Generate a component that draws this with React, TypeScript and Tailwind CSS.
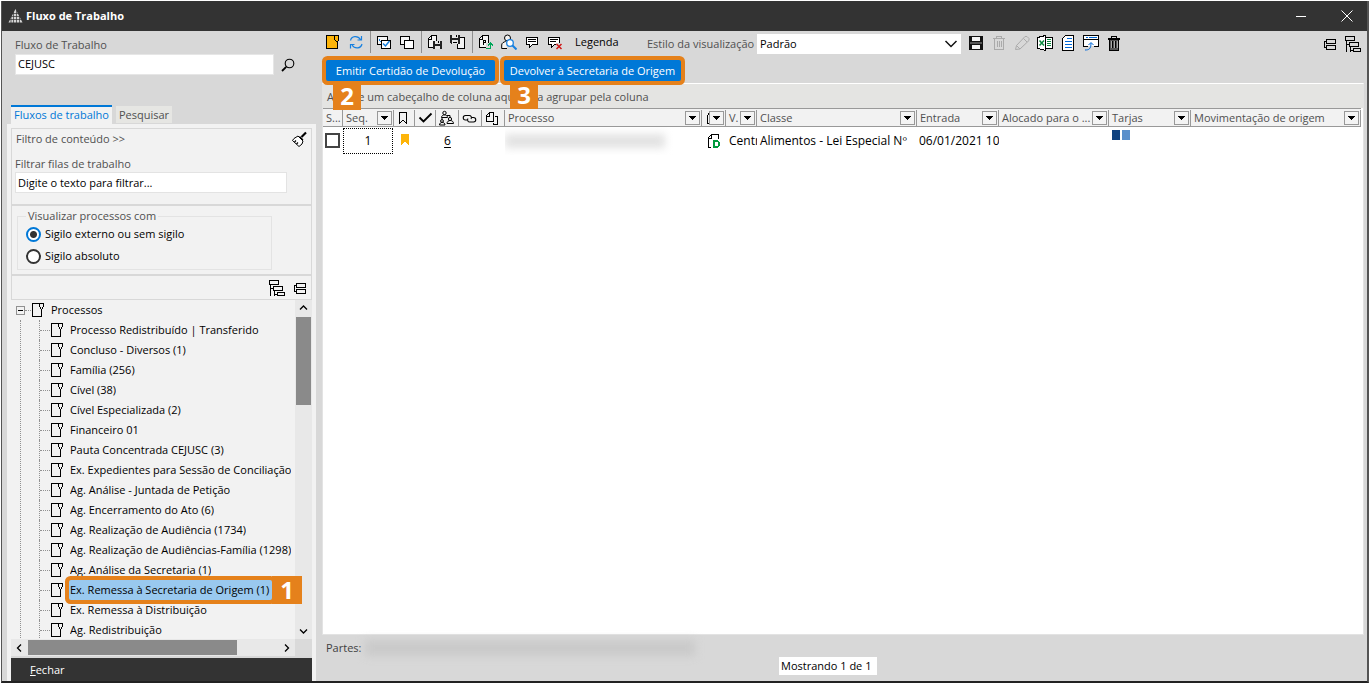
import { useState, type ReactNode } from "react";

type IconProps = { children: ReactNode; className?: string };

function Icon({ children, className = "h-4 w-4" }: IconProps) {
  return (
    <svg
      viewBox="0 0 16 16"
      className={`${className} shrink-0`}
      fill="none"
      stroke="#000"
      strokeWidth="1"
      shapeRendering="crispEdges"
      aria-hidden="true"
    >
      {children}
    </svg>
  );
}

const QueueIcon = () => (
  <Icon>
    <path d="M11.500 1.500h-10v13h9v-6M8.500 2v3M9.500 5v2M10.500 7v2M11.500 5v2M12.500 2v3M8 1.500h5" />
  </Icon>
);

const TreeExpandIcon = () => (
  <Icon>
    <path d="M.5.5h9v4h-9zM4.500 6.500h9v4h-9zM8.500 12.500h7v3h-7zM1.500 5v10.500M1.500 8.500h3M5.500 11v4.500M5.500 14.500h3" />
  </Icon>
);

const TreeCollapseIcon = () => (
  <Icon>
    <path d="M4.500 3.500h9v4h-9zM4.500 9.500h9v4h-9zM4 5.500H2.500v6H4" />
  </Icon>
);

const TrashIcon = ({ muted = false }: { muted?: boolean }) => (
  <Icon>
    {muted ? (
      <path d="M2 3.500h12M5.500 3V1.500h5V3M3.500 4v10.500h9V4M6.500 6v6M8.500 6v6M10.500 6v6" stroke="#aaa" />
    ) : (
      <g>
        <rect x="3" y="4" width="10" height="11" fill="#555" stroke="none" />
        <path d="M2 3.500h12M2 4.500h12M5.500 3V1.500h5V3M3.500 5v10h9V5" />
        <path d="M6.500 6v7M9.500 6v7" />
        <path d="M5.500 6v7M8.500 6v7M11.500 6v7" stroke="#aaa" />
      </g>
    )}
  </Icon>
);

function ToolButton({ label, children }: { label: string; children: ReactNode }) {
  return (
    <button type="button" aria-label={label} className="flex h-4 w-4 shrink-0 items-center justify-center">
      {children}
    </button>
  );
}

const Divider = () => <span className="mr-[5px] ml-1.5 h-[22px] w-px shrink-0 bg-[#8f8f8f]" />;

function Badge({ children, className }: { children: ReactNode; className: string }) {
  return (
    <span
      className={`absolute z-20 flex items-center justify-center bg-[#e5811b] font-['Open_Sans',sans-serif] text-2xl leading-6 font-bold text-white ${className}`}
    >
      {children}
    </span>
  );
}

const queues = [
  "Processo Redistribuído | Transferido",
  "Concluso - Diversos (1)",
  "Família (256)",
  "Cível (38)",
  "Cível Especializada (2)",
  "Financeiro 01",
  "Pauta Concentrada CEJUSC (3)",
  "Ex. Expedientes para Sessão de Conciliação",
  "Ag. Análise - Juntada de Petição",
  "Ag. Encerramento do Ato (6)",
  "Ag. Realização de Audiência (1734)",
  "Ag. Realização de Audiências-Família (1298)",
  "Ag. Análise da Secretaria (1)",
  "Ex. Remessa à Secretaria de Origem (1)",
  "Ex. Remessa à Distribuição",
  "Ag. Redistribuição",
];

const SELECTED = "Ex. Remessa à Secretaria de Origem (1)";

function TitleBar() {
  return (
    <header className="flex h-[30px] shrink-0 items-center bg-[#333] pl-1.5 text-white">
      <svg viewBox="0 0 16 16" className="h-4 w-4" aria-hidden="true">
        <path d="M7.500 1L14.500 14.500H.500z" fill="#d5d5d5" />
        <path d="M4 5.500h8M3 8.500h10M1 11.500h14M5.500 4v11M8.500 2v13M11.500 8v7M3 9v6" stroke="#333" strokeWidth=".7" />
      </svg>
      <h1 className="ml-0.5 flex-1 text-[11px] font-bold">Fluxo de Trabalho</h1>
      <button type="button" aria-label="Minimizar" className="mr-[30px] flex h-4 w-4 items-center justify-center">
        <svg viewBox="0 0 16 16" className="h-4 w-4" stroke="#fff" shapeRendering="crispEdges">
          <path d="M3 8.500h10" />
        </svg>
      </button>
      <button type="button" aria-label="Fechar janela" className="mr-3 flex h-4 w-4 items-center justify-center">
        <svg viewBox="0 0 16 16" className="h-4 w-4" stroke="#fff" fill="none">
          <path d="M2.500 2.500l11 11M13.500 2.500l-11 11" />
        </svg>
      </button>
    </header>
  );
}

function Tree() {
  const [selected, setSelected] = useState(SELECTED);
  return (
    <div className="relative flex min-h-0 flex-1 bg-[#f2f2f2]">
      <div className="relative min-w-0 flex-1 overflow-y-clip text-black">
        <div className="flex h-5 items-center">
          <button
            type="button"
            aria-label="Recolher Processos"
            className="ml-[5px] flex h-[9px] w-[9px] items-center justify-center border border-[#919191]"
          >
            <span className="h-px w-[5px] bg-black" />
          </button>
          <span className="w-1.5 border-t border-dotted border-[#919191]" />
          <QueueIcon />
          <span className="ml-1">Processos</span>
        </div>
        <ul className="ml-[9px] border-l border-dotted border-[#919191] pl-[18px]">
          {queues.map((name) => (
            <li key={name} className="flex h-5 items-center border-l border-dotted border-[#919191]">
              <span className="w-2.5 shrink-0 border-t border-dotted border-[#919191]" />
              <QueueIcon />
              {name === SELECTED ? (
                <span className="relative z-10 ml-[3px]">
                  <button
                    type="button"
                    onClick={() => setSelected(name)}
                    className="block h-5 w-[203px] rounded-xs bg-[#99c9ef] px-px text-left whitespace-nowrap ring-4 ring-[#e5811b]"
                  >
                    {name}
                  </button>
                  <Badge className="-top-1 left-full h-7 w-[30px]">1</Badge>
                </span>
              ) : (
                <button
                  type="button"
                  onClick={() => setSelected(name)}
                  aria-current={name === selected}
                  className="ml-1 min-w-0 overflow-hidden text-left whitespace-nowrap"
                >
                  {name}
                </button>
              )}
            </li>
          ))}
        </ul>
      </div>
      <div className="flex w-[17px] flex-col items-center bg-[#e8e8e8]" aria-hidden="true">
        <Icon>
          <path d="M4 9.500l3.500-3.500L11 9.500" strokeWidth="1.300" shapeRendering="auto" />
        </Icon>
        <div className="mt-px h-[88px] w-[15px] bg-[#8a8a8a]" />
        <div className="flex-1" />
        <Icon>
          <path d="M4 6.500l3.500 3.500L11 6.500" strokeWidth="1.300" shapeRendering="auto" />
        </Icon>
      </div>
    </div>
  );
}

function Sidebar() {
  const [secrecy, setSecrecy] = useState("externo");
  const radio =
    "m-0 h-[15px] w-[15px] appearance-none rounded-full border-2 border-[#333] bg-white checked:border-[#0078d7] checked:bg-[radial-gradient(circle,#333_0_3px,#fff_4px)]";
  return (
    <aside className="flex w-[314px] shrink-0 flex-col pl-[5px]">
      <div className="h-[74px] shrink-0 px-2 pt-1.5">
        <label htmlFor="fluxo" className="block h-[17px] leading-4 text-[#505050]">
          Fluxo de Trabalho
        </label>
        <div className="flex items-center gap-1.5">
          <input
            id="fluxo"
            defaultValue="CEJUSC"
            className="h-[21px] w-[259px] border border-[#e6e6e6] bg-white px-0.5 pb-0.5 text-black outline-none"
          />
          <button type="button" aria-label="Buscar fluxo" className="h-4 w-4">
            <Icon>
              <circle cx="9.500" cy="6.500" r="4.300" shapeRendering="auto" strokeWidth="1.100" />
              <path d="M6.200 9.800L2 14" shapeRendering="auto" strokeWidth="1.800" />
            </Icon>
          </button>
        </div>
      </div>
      <div role="tablist" className="flex h-[19px] shrink-0 gap-1 pl-1">
        <button
          type="button"
          role="tab"
          aria-selected="true"
          className="w-[101px] border-t-2 border-[#0078d7] bg-[#f2f2f2] pb-0.5 whitespace-nowrap text-[#0078d7]"
        >
          Fluxos de trabalho
        </button>
        <button
          type="button"
          role="tab"
          aria-selected="false"
          className="mt-px mb-px w-14 bg-[#e6e6e3] pt-px whitespace-nowrap text-[#505050]"
        >
          Pesquisar
        </button>
      </div>
      <div className="flex min-h-0 flex-1 flex-col bg-[#f2f2f2] px-1 pt-1">
        <section className="shrink-0 border border-b-2 border-[#d8d8d8] text-[#505050]">
          <div className="flex h-[26px] items-start justify-between pt-0.5 pr-1 pl-1">
            <span className="leading-4">Filtro de conteúdo &gt;&gt;</span>
            <button type="button" aria-label="Limpar filtros" className="h-4 w-4">
              <Icon>
                <g shapeRendering="auto">
                  <path d="M15 1.500L10.500 6" strokeWidth="2.200" />
                  <path d="M7 5l5 5-1 3-3 2.500L1.500 9.500 3 7.500z" fill="#fff" />
                  <path d="M8.500 5.500l3.500 3.500M3.500 11l1.500-1.500M5.500 13l1.500-1.500" strokeWidth="1.200" />
                </g>
              </Icon>
            </button>
          </div>
          <div className="h-[49px] px-[3px] pt-px">
            <label htmlFor="filtro" className="block h-4 leading-4">
              Filtrar filas de trabalho
            </label>
            <input
              id="filtro"
              placeholder="Digite o texto para filtrar..."
              className="h-[21px] w-[272px] border border-[#e3e3e3] bg-white px-0.5 outline-none placeholder:text-black placeholder:opacity-100"
            />
          </div>
        </section>
        <section className="h-[70px] shrink-0 border-x border-b-2 border-[#d8d8d8] pt-0.5 pl-[5px]">
          <fieldset className="h-[62px] w-[255px] border border-[#e3e3e3] pl-2">
            <legend className="px-0.5 leading-4 text-[#505050]">Visualizar processos com</legend>
            <label className="-mt-px flex h-[22px] items-center gap-1 text-black">
              <input
                type="radio"
                name="sigilo"
                checked={secrecy === "externo"}
                onChange={() => setSecrecy("externo")}
                className={radio}
              />
              Sigilo externo ou sem sigilo
            </label>
            <label className="flex h-[22px] items-center gap-1 text-black">
              <input
                type="radio"
                name="sigilo"
                checked={secrecy === "absoluto"}
                onChange={() => setSecrecy("absoluto")}
                className={radio}
              />
              Sigilo absoluto
            </label>
          </fieldset>
        </section>
        <div className="flex h-6 shrink-0 items-center justify-end gap-[7px] border-x border-b border-[#d8d8d8] pr-[3px]">
          <ToolButton label="Expandir árvore">
            <TreeExpandIcon />
          </ToolButton>
          <ToolButton label="Recolher árvore">
            <TreeCollapseIcon />
          </ToolButton>
        </div>
        <Tree />
        <div className="flex h-[19px] shrink-0 items-start border-b-2 border-[#d8d8d8] bg-[#dadada] pr-[17px]" aria-hidden="true">
          <div className="flex h-[17px] flex-1 items-center bg-[#e8e8e8]">
            <Icon>
              <path d="M10 4.500L6.500 8l3.500 3.500" strokeWidth="1.300" shapeRendering="auto" />
            </Icon>
            <div className="ml-px h-[15px] w-[209px] bg-[#8a8a8a]" />
            <div className="flex-1" />
            <Icon>
              <path d="M6 4.500L9.500 8 6 11.500" strokeWidth="1.300" shapeRendering="auto" />
            </Icon>
          </div>
        </div>
        <button type="button" className="h-[23px] shrink-0 bg-[#333] pt-px pl-[19px] text-left text-white">
          <u>F</u>echar
        </button>
      </div>
    </aside>
  );
}

function Toolbar() {
  return (
    <div className="flex h-6 shrink-0 items-center pl-[3px]">
      <div className="flex items-center pb-0.5">
        <ToolButton label="Fila">
          <Icon>
            <path d="M1.500 1.500h12v4l-1 2v7h-11z" fill="#fdb409" stroke="none" />
            <path d="M14 1.500H1.500v13h11v-5M9.500 2v4M10.500 6v1M11.500 7v1M12.500 7v3M13.500 2v5" />
          </Icon>
        </ToolButton>
        <span className="w-[7px]" />
        <ToolButton label="Atualizar">
          <Icon>
            <g stroke="#1780e0" strokeWidth="1.200" shapeRendering="auto">
              <path d="M2.500 6.500C3.500 2 9.500 1 12.500 5.500M13.500 2v4h-4M14 10c-1 4.500-7 5.500-10 1M2.500 14.500v-4h4" />
            </g>
          </Icon>
        </ToolButton>
        <Divider />
        <ToolButton label="Marcar todos">
          <Icon>
            <path d="M1.500 2.500h10v8h-10z" fill="#f4f4f4" />
            <path d="M3 5.500l1.500 2 1-1" stroke="#1780e0" />
            <path d="M5.500 6.500h9v8h-9z" fill="#fff" />
            <path d="M7 9.500l2.500 2.500 4-5" stroke="#1780e0" strokeWidth="1.500" shapeRendering="auto" />
          </Icon>
        </ToolButton>
        <span className="w-[7px]" />
        <ToolButton label="Desmarcar todos">
          <Icon>
            <path d="M1.500 2.500h9v8h-9z" fill="#f4f4f4" />
            <path d="M5.500 6.500h9v8h-9z" fill="#fff" />
          </Icon>
        </ToolButton>
        <Divider />
        <ToolButton label="Salvar documento">
          <Icon>
            <path d="M4.500 1.500h5v12h-8v-9z" fill="#f4f4f4" />
            <path d="M4.500 2v3H2" />
            <path d="M6 7h8l1 1v7H6z" fill="#222" stroke="none" />
            <path d="M8 7h5v3H8zM8 12h5v3H8z" fill="#e4e4e4" stroke="none" />
            <path d="M11.500 7v2" />
          </Icon>
        </ToolButton>
        <span className="w-[7px]" />
        <ToolButton label="Salvar em lote">
          <Icon>
            <path d="M7.500 3.500h7v11h-7z" fill="#f4f4f4" />
            <path d="M0 1h10v9H1L0 9z" fill="#222" stroke="none" />
            <path d="M2 1h6v3H2zM2 6h6v4H2z" fill="#e4e4e4" stroke="none" />
            <path d="M3 8.500h4M6.500 1v2" />
          </Icon>
        </ToolButton>
        <Divider />
        <ToolButton label="Enviar petição">
          <Icon>
            <path d="M4.500 1.500h6v12h-9v-9z" fill="#f4f4f4" />
            <path d="M4.500 2v3H2M5.500 11V6.500h2v2h-2" />
            <path d="M8 9h6v7H8z" fill="#d8d8d8" stroke="none" />
            <path d="M8 14.500h4.500V9M10 11.500l2.500-2.500 2.500 2.500" stroke="#00a65a" />
          </Icon>
        </ToolButton>
        <span className="w-[7px]" />
        <ToolButton label="Consultar parte">
          <Icon>
            <g shapeRendering="auto">
              <circle cx="6.500" cy="4" r="3" fill="#f4f4f4" />
              <path d="M6 14.500H.700V11c0-2 2-3 4-3.500" fill="#f4f4f4" />
              <circle cx="9" cy="9" r="3.300" stroke="#1780e0" strokeWidth="1.300" fill="#fff" />
              <path d="M11.500 11.500l4 4" stroke="#1780e0" strokeWidth="2" />
            </g>
          </Icon>
        </ToolButton>
        <span className="w-[7px]" />
        <ToolButton label="Observação">
          <Icon>
            <path d="M2.500 3.500h11v7h-5l-3 3v-3h-3z" fill="#fff" />
            <path d="M4 5.500h8M4 7.500h8" />
          </Icon>
        </ToolButton>
        <span className="w-[7px]" />
        <ToolButton label="Remover observação">
          <Icon>
            <path d="M1.500 3.500h11v7h-5l-3 3v-3h-3z" fill="#fff" />
            <path d="M3 5.500h8M3 7.500h6" />
            <path d="M9 9h6v6H9z" fill="#d8d8d8" stroke="none" />
            <path d="M9.500 10l5 5M14.500 10l-5 5" stroke="#d01818" strokeWidth="1.500" shapeRendering="auto" />
          </Icon>
        </ToolButton>
        <button type="button" className="ml-3 w-[72px] text-left leading-4 text-black">
          Legenda
        </button>
      </div>
      <div className="mr-[7px] flex items-center pt-0.5">
        <label htmlFor="estilo" className="w-[110px] whitespace-nowrap text-[#505050]">
          Estilo da visualização
        </label>
        <div className="relative w-[204px]">
          <select id="estilo" className="block h-5 w-full appearance-none bg-white pl-[3px] text-black outline-none">
            <option>Padrão</option>
          </select>
          <svg viewBox="0 0 16 16" className="pointer-events-none absolute top-0.5 right-0.5 h-4 w-4" fill="none" stroke="#111" strokeWidth="1.500">
            <path d="M2.500 5l5.500 5.500L13.500 5" />
          </svg>
        </div>
      </div>
      <div className="flex gap-[7px]">
        <ToolButton label="Salvar visualização">
          <Icon>
            <path d="M1 1h13l1 1v13H1z" fill="#111" stroke="none" />
            <path d="M4 2h8v4H4zM4 10h8v4H4z" fill="#f4f4f4" stroke="none" />
            <path d="M2 7h12v2H2z" fill="#555" stroke="none" />
          </Icon>
        </ToolButton>
        <ToolButton label="Excluir visualização">
          <TrashIcon muted />
        </ToolButton>
        <ToolButton label="Editar visualização">
          <Icon>
            <path d="M1.500 14.500l1-4 8.500-9h2l2 2v2l-9 8.500zM2.500 10.500l3.500 3.500M9.500 3.500l3.500 3.500" stroke="#aaa" shapeRendering="auto" />
          </Icon>
        </ToolButton>
        <ToolButton label="Exportar para Excel">
          <Icon>
            <path d="M8 2.500h7.500v11H8" fill="#fff" />
            <path d="M8.500.500v15l-8-2v-11z" fill="#fff" />
            <path d="M2.500 5.500l4.500 5M7 5.500l-4.500 5" stroke="#0a8a3e" strokeWidth="1.500" shapeRendering="auto" />
            <path d="M10 4.500h4M10 6.500h4M10 8.500h4M10 10.500h4" stroke="#0a8a3e" />
          </Icon>
        </ToolButton>
        <ToolButton label="Relatório">
          <Icon>
            <path d="M5.500.500h8v15h-11v-12z" fill="#fff" />
            <path d="M7 3.500h5M5 6.500h7M5 9.500h7M5 12.500h7" stroke="#0068d8" />
          </Icon>
        </ToolButton>
        <ToolButton label="Abrir janela">
          <Icon>
            <path d="M.500.500h15v11H.500z" fill="#fff" />
            <path d="M.500 4.500h15" />
            <path d="M3 2.500h1.500M6 2.500h8" stroke="#0068d8" />
            <path d="M5 11h6v2H5z" fill="#d8d8d8" stroke="none" />
            <path d="M2 15c4 0 6-1 6-7M5.500 10L8 7.500l2.500 2.500" stroke="#0068d8" shapeRendering="auto" />
          </Icon>
        </ToolButton>
        <ToolButton label="Excluir">
          <TrashIcon />
        </ToolButton>
      </div>
      <div className="ml-auto flex items-center gap-[7px] pt-0.5 pr-1.5">
        <ToolButton label="Recolher grade">
          <TreeCollapseIcon />
        </ToolButton>
        <ToolButton label="Expandir grade">
          <TreeExpandIcon />
        </ToolButton>
      </div>
    </div>
  );
}

const columns: { key: string; width: string; label: ReactNode; filter?: boolean }[] = [
  { key: "sel", width: "w-5", label: "S..." },
  { key: "seq", width: "w-[51px]", label: "Seq.", filter: true },
  {
    key: "flag",
    width: "w-[21px]",
    label: (
      <Icon>
        <path d="M2.500 2.500h7v11l-3.500-3.500-3.500 3.500z" />
      </Icon>
    ),
  },
  {
    key: "check",
    width: "w-[21px]",
    label: (
      <Icon>
        <path d="M1.500 7.500l4 4 8-8" strokeWidth="1.800" shapeRendering="auto" />
      </Icon>
    ),
  },
  {
    key: "people",
    width: "w-[23px]",
    label: (
      <Icon>
        <g shapeRendering="auto">
          <circle cx="5.500" cy="3" r="1.700" />
          <path d="M2.500 7.500c0-3.500 6-3.500 6 0zM8 5.500h3v2M3 7.500v2" />
          <circle cx="11" cy="9" r="1.600" />
          <path d="M8 13.500c0-4 6.500-4 6.500 0z" />
          <circle cx="3" cy="11" r="1.400" />
          <path d="M.500 15c0-3.500 5.500-3.500 5.500 0z" />
        </g>
      </Icon>
    ),
  },
  {
    key: "link",
    width: "w-[23px]",
    label: (
      <Icon>
        <g shapeRendering="auto" strokeWidth="1.100">
          <path d="M5 10H3.500a2.200 2.200 0 010-4.500H7A2.200 2.200 0 019 9" />
          <path d="M10 7.500h1.500a2.200 2.200 0 010 4.500H8a2.200 2.200 0 01-2-3.500" />
        </g>
      </Icon>
    ),
  },
  {
    key: "attach",
    width: "w-[23px]",
    label: (
      <Icon>
        <path d="M8.500 2.500h-4l-3 3v6h7zM4.500 3v3H2M10 6.500h2.500v8h-4V13" />
      </Icon>
    ),
  },
  { key: "processo", width: "w-[197px]", label: "Processo", filter: true },
  {
    key: "doc",
    width: "w-6",
    label: (
      <Icon>
        <path d="M7 2.500H4.500l-2 3v8H5M4.500 3v3" />
      </Icon>
    ),
    filter: true,
  },
  { key: "vara", width: "w-[31px]", label: "V.", filter: true },
  { key: "classe", width: "w-40", label: "Classe", filter: true },
  { key: "entrada", width: "w-[82px]", label: "Entrada", filter: true },
  { key: "alocado", width: "w-[110px]", label: "Alocado para o ...", filter: true },
  { key: "tarjas", width: "w-[82px]", label: "Tarjas", filter: true },
  { key: "mov", width: "w-auto", label: "Movimentação de origem", filter: true },
];

function FilterButton() {
  return (
    <button
      type="button"
      aria-label="Filtrar coluna"
      className="absolute top-px right-px flex h-3.5 w-[15px] items-center justify-center border border-[#999] bg-[#f4f4f4]"
    >
      <svg viewBox="0 0 7 4" className="h-1 w-[7px]" shapeRendering="crispEdges">
        <path d="M0 0h7L3.500 4z" />
      </svg>
    </button>
  );
}

function ProcessTable() {
  const cell = "overflow-hidden whitespace-nowrap p-0 align-middle";
  return (
    <table className="w-full table-fixed border-collapse text-black">
      <thead className="bg-[#f2f2f2] text-[#505050]">
        <tr className="h-[18px] border-y border-[#999]">
          {columns.map((c) => (
            <th key={c.key} className={`${c.width} p-0 text-left align-middle font-normal`}>
              <div className="relative flex h-4 items-center overflow-hidden border-r border-[#999] pl-[3px] leading-4 whitespace-nowrap">
                {c.label}
                {c.filter && <FilterButton />}
              </div>
            </th>
          ))}
        </tr>
      </thead>
      <tbody>
        <tr className="h-7 text-xs">
          <td className={cell}>
            <input
              type="checkbox"
              aria-label="Selecionar processo"
              className="ml-0.5 block h-[15px] w-[15px] appearance-none border-2 border-[#444] bg-white"
            />
          </td>
          <td className={cell}>
            <div className="mr-px flex h-[26px] items-center justify-center border border-dotted border-black">1</div>
          </td>
          <td className={cell}>
            <Icon className="ml-[3px] h-4 w-4">
              <path d="M4 1h8v11l-4-3.500L4 12z" fill="#fdb409" stroke="none" />
            </Icon>
          </td>
          <td className={cell} />
          <td className={`${cell} text-center`}>
            <a href="#partes" className="underline underline-offset-2">
              6
            </a>
          </td>
          <td className={cell} />
          <td className={cell} />
          <td className={cell}>
            <div className="h-3.5 w-40 bg-[#e2e2e2] blur-xs" aria-hidden="true" />
          </td>
          <td className={cell}>
            <Icon className="ml-1 h-4 w-4">
              <path d="M5 14.500H2.500v-10l3-3h7v4M5.500 2v3H3" />
              <path d="M8 8h3.500l1.500 1.500v3L11.500 14H8z" stroke="#009a3c" strokeWidth="2" fill="#fff" />
            </Icon>
          </td>
          <td className={`${cell} pl-[3px]`}>Central</td>
          <td className={`${cell} pl-[3px]`}>Alimentos - Lei Especial Nº</td>
          <td className={`${cell} pl-0.5`}>06/01/2021 10:32</td>
          <td className={cell} />
          <td className={cell}>
            <div className="mb-3 flex gap-0.5 pl-[3px]">
              <span className="h-2.5 w-2 bg-[#0f427f]" />
              <span className="h-2.5 w-2 bg-[#5b90cb]" />
            </div>
          </td>
          <td className={cell} />
        </tr>
      </tbody>
    </table>
  );
}

function Workspace() {
  const action =
    "relative h-[21px] rounded-xs bg-[#0078d7] whitespace-nowrap text-white ring-4 ring-[#e5811b]";
  return (
    <main className="flex min-w-0 flex-1 flex-col pl-1.5">
      <Toolbar />
      <div className="flex h-7 shrink-0 gap-[9px] pt-[5px] pl-1">
        <button type="button" className={`${action} w-[169px] pt-px`}>
          Emitir Certidão de Devolução
          <Badge className="top-[22px] left-[7px] h-7 w-7">2</Badge>
        </button>
        <button type="button" className={`${action} w-[177px] pt-px`}>
          Devolver à Secretaria de Origem
          <Badge className="top-[21px] left-1.5 h-7 w-7">3</Badge>
        </button>
      </div>
      <div className="mr-[3px] flex min-h-0 flex-1 flex-col border border-[#e3e3e3] border-t-white bg-white">
        <p className="flex h-6 shrink-0 items-center bg-[#e4e4e2] pt-0.5 pl-1 text-[#505050]">
          Arraste um cabeçalho de coluna aqui para agrupar pela coluna
        </p>
        <div className="min-h-0 flex-1 overflow-hidden pr-0.5">
          <ProcessTable />
        </div>
      </div>
      <footer className="h-[46px] shrink-0 pr-[3px]">
        <div id="partes" className="flex h-[22px] items-center gap-1 pt-1 pl-1 text-[#404040]">
          Partes:
          <span className="h-4 w-[330px] bg-[#cacaca] blur-xs" aria-hidden="true" />
        </div>
        <p className="ml-[457px] flex h-[18px] w-[98px] items-center bg-white pt-px pl-0.5 whitespace-nowrap text-black">
          Mostrando 1 de 1
        </p>
      </footer>
    </main>
  );
}

export default function App() {
  return (
    <div className="flex h-screen flex-col bg-white pt-px pl-px font-['Open_Sans','Noto_Sans',sans-serif] text-[11px]">
      <div className="flex min-h-0 flex-1 flex-col border-r-2 border-b-2 border-l border-[#555] border-b-[#222] bg-[#d8d8d8]">
        <TitleBar />
        <div className="flex min-h-0 flex-1">
          <Sidebar />
          <Workspace />
        </div>
      </div>
    </div>
  );
}
